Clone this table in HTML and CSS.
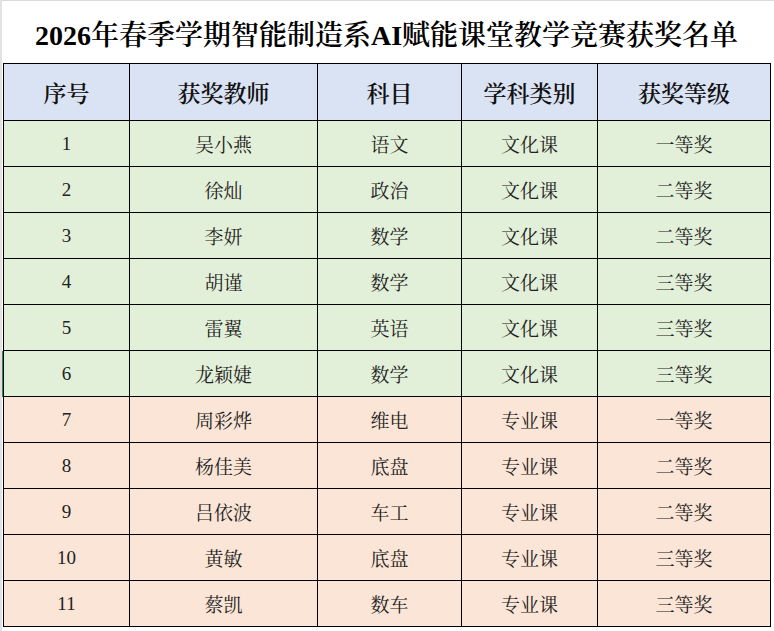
FILE: index.html
```html
<!DOCTYPE html>
<html lang="zh-CN">
<head>
<meta charset="utf-8">
<title>获奖名单</title>
<link rel="stylesheet" href="styles.css">
</head>
<body>
<div class="sheet">
  <div class="grid">
    <div class="title">2026年春季学期智能制造系AI赋能课堂教学竞赛获奖名单</div>
    <table class="awards">
      <colgroup>
        <col class="c1"><col class="c2"><col class="c3"><col class="c4"><col class="c5">
      </colgroup>
      <thead>
        <tr><th>序号</th><th>获奖教师</th><th>科目</th><th>学科类别</th><th>获奖等级</th></tr>
      </thead>
      <tbody>
        <tr class="green"><td>1</td><td>吴小燕</td><td>语文</td><td>文化课</td><td>一等奖</td></tr>
        <tr class="green"><td>2</td><td>徐灿</td><td>政治</td><td>文化课</td><td>二等奖</td></tr>
        <tr class="green"><td>3</td><td>李妍</td><td>数学</td><td>文化课</td><td>二等奖</td></tr>
        <tr class="green"><td>4</td><td>胡谨</td><td>数学</td><td>文化课</td><td>三等奖</td></tr>
        <tr class="green"><td>5</td><td>雷翼</td><td>英语</td><td>文化课</td><td>三等奖</td></tr>
        <tr class="green"><td class="selected">6</td><td>龙颖婕</td><td>数学</td><td>文化课</td><td>三等奖</td></tr>
        <tr class="orange"><td>7</td><td>周彩烨</td><td>维电</td><td>专业课</td><td>一等奖</td></tr>
        <tr class="orange"><td>8</td><td>杨佳美</td><td>底盘</td><td>专业课</td><td>二等奖</td></tr>
        <tr class="orange"><td>9</td><td>吕依波</td><td>车工</td><td>专业课</td><td>二等奖</td></tr>
        <tr class="orange"><td>10</td><td>黄敏</td><td>底盘</td><td>专业课</td><td>三等奖</td></tr>
        <tr class="orange"><td>11</td><td>蔡凯</td><td>数车</td><td>专业课</td><td>三等奖</td></tr>
      </tbody>
    </table>
  </div>
</div>
</body>
</html>
```

FILE: styles.css
```css
html, body {
  margin: 0;
  padding: 0;
  background: #ffffff;
}

body {
  font-family: "Liberation Serif", "Noto Serif CJK SC", "Noto Sans CJK SC", serif;
  color: #1a1a1a;
}

.sheet {
  width: 774px;
  height: 631px;
  box-sizing: border-box;
  border-top: 1px solid #dadada;
  border-left: 2px solid #e2e2e2;
  padding-left: 1px;
  overflow: hidden;
}

.grid {
  width: 767px;
}

.title {
  height: 62px;
  display: flex;
  align-items: center;
  justify-content: center;
  font-size: 28px;
  font-weight: 600;
  color: #000;
  padding-top: 1px;
  box-sizing: border-box;
}

.awards {
  border-collapse: collapse;
  table-layout: fixed;
  width: 767px;
}

.c1 { width: 126px; }
.c2 { width: 188px; }
.c3 { width: 144px; }
.c4 { width: 136px; }
.c5 { width: 173px; }

.awards th,
.awards td {
  border: 1px solid #000;
  text-align: center;
  padding: 0;
}

.awards th {
  height: 56px;
  background: #dae3f3;
  font-size: 23px;
  font-weight: 600;
  color: #111;
}

.awards td {
  height: 45px;
  font-size: 19px;
  font-weight: normal;
  color: #222;
}

.green td { background: #e2f0d9; }
.orange td { background: #fbe5d6; }

.awards td.selected {
  box-shadow: -2px 0 0 #1f8f5f;
}
```
